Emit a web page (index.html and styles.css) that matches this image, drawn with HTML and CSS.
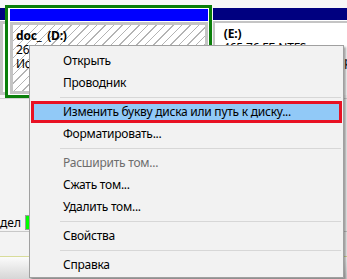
FILE: index.html
```html
<!DOCTYPE html>
<html lang="ru">
<head>
    <meta charset="UTF-8">
    <title>Управление дисками</title>
    <link rel="stylesheet" href="styles.css">
</head>
<body>
    <div class="screen">
        <div class="map">
            <div class="part stub">
                <div class="bar navy"></div>
                <div class="frame"><div class="body"></div></div>
            </div>
            <div class="part selected">
                <div class="bar blue"></div>
                <div class="frame"><div class="body hatch">
                    <div class="name">doc_  (D:)</div>
                    <div>267,00 ГБ NTFS</div>
                    <div>Исправен (Основной раздел)</div>
                </div></div>
            </div>
            <div class="part">
                <div class="bar navy"></div>
                <div class="frame"><div class="body">
                    <div class="name">  (E:)</div>
                    <div class="name-pad">465,76 ГБ NTFS</div>
                    <div class="name-pad">Исправен (Основной раздел)</div>
                </div></div>
            </div>
        </div>

        <div class="space"></div>

        <div class="legend">
            <div class="legend-text"><span>Основной раздел</span></div>
            <span class="swatch"></span>
            <span>Логический диск</span>
        </div>

        <div class="blank"></div>
        <div class="status"></div>

        <ul class="menu">
            <li class="item">Открыть</li>
            <li class="item">Проводник</li>
            <li class="sep"></li>
            <li class="item active">Изменить букву диска или путь к диску...</li>
            <li class="item">Форматировать...</li>
            <li class="sep"></li>
            <li class="item disabled">Расширить том...</li>
            <li class="item">Сжать том...</li>
            <li class="item">Удалить том...</li>
            <li class="sep"></li>
            <li class="item">Свойства</li>
            <li class="sep"></li>
            <li class="item">Справка</li>
        </ul>
    </div>
</body>
</html>
```

FILE: styles.css
```css
body {
    margin: 0;
    font-family: 'Noto Sans', sans-serif;
    font-size: 12px;
    color: #000;
}
.screen {
    position: relative;
    width: 347px;
    height: 279px;
    overflow: hidden;
    background: #f3f3f3;
    display: flex;
    flex-direction: column;
}

/* disk map */
.map {
    display: flex;
    height: 99px;
    padding-top: 5px;
    box-sizing: border-box;
    background: #f7f7f7;
    border-bottom: 1px solid #d0d0d0;
}
.part {
    display: flex;
    flex-direction: column;
    flex-shrink: 0;
    margin-top: 3px;
    background: #fff;
}
.stub {
    width: 5px;
    margin-bottom: 3px;
}
.selected {
    width: 207px;
    margin-top: 0;
    border: 3px solid #0a7f0a;
    padding: 1px 1px 1px 2px;
    box-sizing: border-box;
}
.part:last-child {
    flex: 1;
    min-width: 0;
    margin-left: 1px;
    margin-bottom: 3px;
}
.bar {
    height: 12px;
    flex-shrink: 0;
}
.blue { background: #0000ff; }
.navy { background: #000080; }
.frame {
    flex: 1;
    display: flex;
    min-width: 0;
    background: #c4c4c4;
    padding: 3px;
    margin-top: 1px;
}
.part:last-child .frame {
    padding: 2px 0 0 2px;
}
.body {
    flex: 1;
    min-width: 0;
    background: #fff;
    padding: 4px 3px 0;
    line-height: 14px;
    letter-spacing: -0.2px;
    white-space: nowrap;
    overflow: hidden;
}
.hatch {
    background: repeating-linear-gradient(135deg, #fff 0 5px, #b4b4b4 5px 6px);
}
.name {
    font-weight: bold;
    white-space: pre;
}
.name-pad {
    padding-left: 5px;
}

/* legend */
.space {
    height: 114px;
}
.legend {
    display: flex;
    align-items: center;
    gap: 4px;
    height: 18px;
    border-bottom: 1px solid #c8c8c8;
    white-space: nowrap;
}
.legend-text {
    width: 21px;
    display: flex;
    justify-content: flex-end;
    overflow: hidden;
}
.swatch {
    width: 4px;
    height: 13px;
    background: #00ff00;
    border: 1px solid #9a9a9a;
    flex-shrink: 0;
}
.blank {
    flex: 1;
    border-bottom: 1px solid #d8dc9a;
}
.status {
    height: 22px;
    background: linear-gradient(#fbfbfb, #d6d6d6);
}

/* context menu */
.menu {
    position: absolute;
    left: 29px;
    top: 45px;
    width: 315px;
    margin: 0;
    padding: 4px 0 1px;
    list-style: none;
    background: #f2f2f2;
    border: 1px solid #a0a0a0;
    box-sizing: border-box;
    box-shadow: 2px 2px 2px rgba(0, 0, 0, 0.35);
}
.item {
    height: 22px;
    line-height: 22px;
    padding-left: 33px;
    letter-spacing: -0.25px;
    white-space: nowrap;
}
.item.active {
    margin: 0 1px;
    padding-left: 29px;
    line-height: 16px;
    background: #91c9f7;
    border: 3px solid #e81123;
    box-sizing: border-box;
}
.item.disabled {
    color: #6d6d6d;
}
.sep {
    height: 7px;
    display: flex;
    align-items: center;
}
.sep::after {
    content: '';
    flex: 1;
    margin: 0 2px 0 30px;
    border-top: 1px solid #d7d7d7;
}
```
